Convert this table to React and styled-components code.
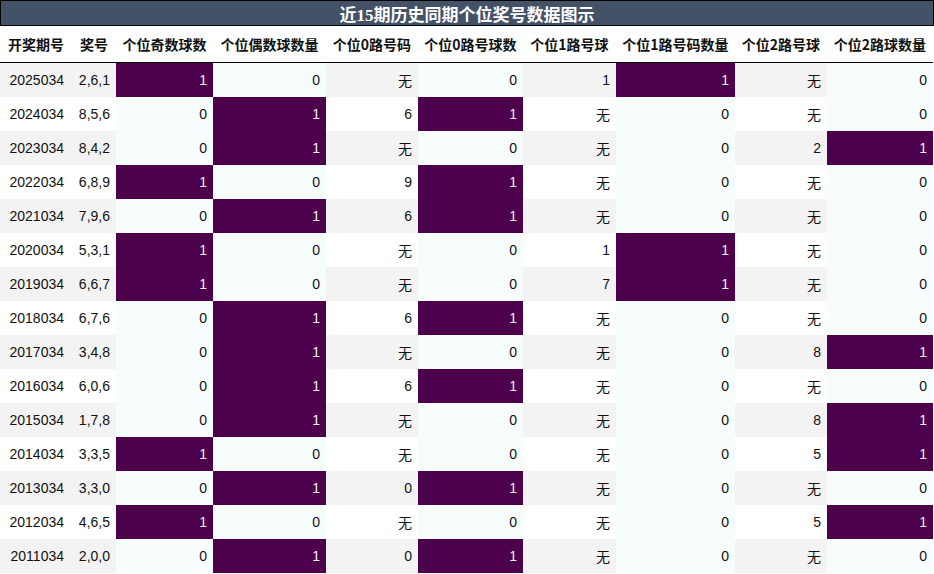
import React from "react";
import styled, { createGlobalStyle } from "styled-components";

const Global = createGlobalStyle`
  html, body { margin: 0; padding: 0; background: #fff; }
  body { font-family: "Liberation Sans", "Noto Sans CJK SC", sans-serif; }
`;

const COLS = "72px 44px 97px 113px 92px 105px 93px 119px 92px 106px";

const Wrap = styled.div`
  width: 934px;
`;

const Title = styled.div`
  height: 26px;
  box-sizing: border-box;
  border: 1px solid #000;
  background: #435266;
  color: #fff;
  font-family: "Liberation Serif", "Noto Sans CJK SC", serif;
  font-weight: bold;
  font-size: 17px;
  display: flex;
  align-items: center;
  justify-content: center;
`;

const Grid = styled.div`
  display: grid;
  grid-template-columns: ${COLS};
`;

const Head = styled.div`
  height: 36px;
  border-bottom: 1px solid #000;
  display: flex;
  align-items: center;
  justify-content: center;
  font-family: "Noto Sans CJK SC", sans-serif;
  font-weight: bold;
  font-size: 14px;
  color: #111;
  white-space: nowrap;
`;

const Cell = styled.div`
  height: 34px;
  display: flex;
  align-items: center;
  justify-content: flex-end;
  padding-right: ${(p) => (p.$first ? 8 : 6)}px;
  box-sizing: border-box;
  font-size: 14px;
  color: ${(p) => (p.$hot ? "#f1f1f1" : "#111")};
  background: ${(p) =>
    p.$kind === "count"
      ? p.$hot
        ? "#4d004b"
        : "#f7fcfd"
      : p.$odd
      ? "#f3f3f3"
      : "#ffffff"};
  font-family: "Liberation Sans", "Noto Sans CJK SC", sans-serif;
`;

const headers = [
  "开奖期号",
  "奖号",
  "个位奇数球数",
  "个位偶数球数量",
  "个位0路号码",
  "个位0路号球数",
  "个位1路号球",
  "个位1路号码数量",
  "个位2路号球",
  "个位2路球数量",
];

const kinds = ["plain", "plain", "count", "count", "plain", "count", "plain", "count", "plain", "count"];

const data = [
  ["2025034", "2,6,1", 1, 0, "无", 0, "1", 1, "无", 0],
  ["2024034", "8,5,6", 0, 1, "6", 1, "无", 0, "无", 0],
  ["2023034", "8,4,2", 0, 1, "无", 0, "无", 0, "2", 1],
  ["2022034", "6,8,9", 1, 0, "9", 1, "无", 0, "无", 0],
  ["2021034", "7,9,6", 0, 1, "6", 1, "无", 0, "无", 0],
  ["2020034", "5,3,1", 1, 0, "无", 0, "1", 1, "无", 0],
  ["2019034", "6,6,7", 1, 0, "无", 0, "7", 1, "无", 0],
  ["2018034", "6,7,6", 0, 1, "6", 1, "无", 0, "无", 0],
  ["2017034", "3,4,8", 0, 1, "无", 0, "无", 0, "8", 1],
  ["2016034", "6,0,6", 0, 1, "6", 1, "无", 0, "无", 0],
  ["2015034", "1,7,8", 0, 1, "无", 0, "无", 0, "8", 1],
  ["2014034", "3,3,5", 1, 0, "无", 0, "无", 0, "5", 1],
  ["2013034", "3,3,0", 0, 1, "0", 1, "无", 0, "无", 0],
  ["2012034", "4,6,5", 1, 0, "无", 0, "无", 0, "5", 1],
  ["2011034", "2,0,0", 0, 1, "0", 1, "无", 0, "无", 0],
];

export default function App() {
  return (
    <Wrap>
      <Global />
      <Title>近15期历史同期个位奖号数据图示</Title>
      <Grid>
        {headers.map((h) => (
          <Head key={h}>{h}</Head>
        ))}
        {data.map((row, r) =>
          row.map((v, c) => (
            <Cell
              key={r + "-" + c}
              $kind={kinds[c]}
              $hot={kinds[c] === "count" && v === 1}
              $odd={r % 2 === 0}
              $first={c === 0}
            >
              {v}
            </Cell>
          ))
        )}
      </Grid>
    </Wrap>
  );
}
